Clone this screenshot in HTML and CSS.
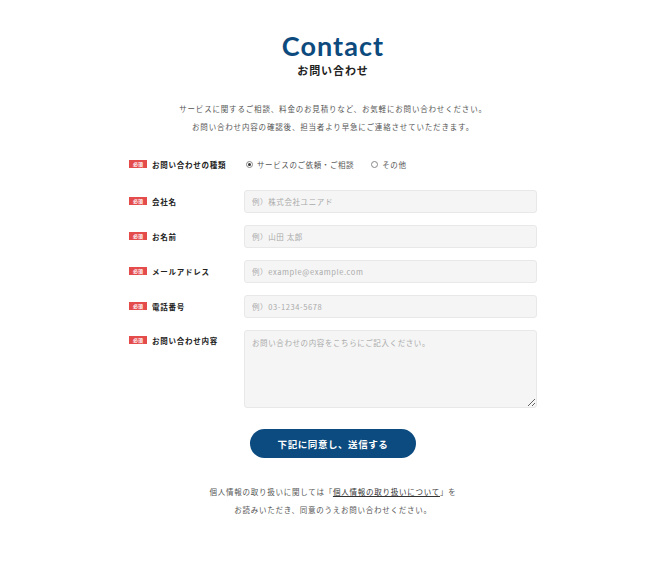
FILE: index.html
```html
<!DOCTYPE html>
<html lang="ja">
<head>
  <meta charset="UTF-8" />
  <meta name="viewport" content="width=device-width, initial-scale=1" />
  <title>Contact</title>
  <link rel="stylesheet" href="styles.css">
</head>
<body>

  <main class="contact">
    <header class="contact-head">
      <h1>Contact</h1>
      <p class="sub">お問い合わせ</p>
    </header>

    <p class="lead">
      サービスに関するご相談、料金のお見積りなど、お気軽にお問い合わせください。<br>
      お問い合わせ内容の確認後、担当者より早急にご連絡させていただきます。
    </p>

    <form class="form">
      <div class="row row-type">
        <div class="label"><span class="req">必須</span>お問い合わせの種類</div>
        <div class="field radios">
          <label class="radio"><span class="dot checked"></span>サービスのご依頼・ご相談</label>
          <label class="radio"><span class="dot"></span>その他</label>
        </div>
      </div>

      <div class="row">
        <div class="label"><span class="req">必須</span>会社名</div>
        <div class="field"><input type="text" placeholder="例）株式会社ユニアド"></div>
      </div>

      <div class="row">
        <div class="label"><span class="req">必須</span>お名前</div>
        <div class="field"><input type="text" placeholder="例）山田 太郎"></div>
      </div>

      <div class="row">
        <div class="label"><span class="req">必須</span>メールアドレス</div>
        <div class="field"><input type="email" placeholder="例）example@example.com"></div>
      </div>

      <div class="row">
        <div class="label"><span class="req">必須</span>電話番号</div>
        <div class="field"><input type="tel" placeholder="例）03-1234-5678"></div>
      </div>

      <div class="row row-message">
        <div class="label"><span class="req">必須</span>お問い合わせ内容</div>
        <div class="field"><textarea placeholder="お問い合わせの内容をこちらにご記入ください。"></textarea></div>
      </div>

      <div class="submit">
        <button type="button">下記に同意し、送信する</button>
      </div>
    </form>

    <p class="note">
      個人情報の取り扱いに関しては「<a href="#">個人情報の取り扱いについて</a>」を<br>
      お読みいただき、同意のうえお問い合わせください。
    </p>
  </main>

</body>
</html>
```

FILE: styles.css
```css
/* Reset */
* {
  margin: 0;
  padding: 0;
  box-sizing: border-box;
}

body {
  background-color: #fff;
  color: #333;
  font-family: "Noto Sans CJK JP", "Noto Sans", sans-serif;
}

.contact {
  width: 408px;
  margin: 0 auto;
  padding-top: 30px;
}

.contact-head {
  text-align: center;
}

.contact-head h1 {
  font-family: Lato, "Noto Sans", sans-serif;
  font-weight: 700;
  font-size: 27px;
  line-height: 32px;
  letter-spacing: 0.04em;
  color: #0d4a7e;
}

.contact-head .sub {
  font-size: 11px;
  font-weight: 700;
  line-height: 16px;
  letter-spacing: 0.08em;
  color: #222;
}

.lead {
  margin-top: 22px;
  text-align: center;
  font-size: 7.5px;
  line-height: 18px;
  letter-spacing: 0.11em;
  color: #555;
}

.form {
  margin-top: 21px;
}

.row {
  display: flex;
  align-items: flex-start;
  margin-bottom: 12px;
}

.row-type {
  margin-bottom: 19px;
}

.label {
  width: 115px;
  flex-shrink: 0;
  display: flex;
  align-items: center;
  height: 22px;
  font-size: 7.5px;
  font-weight: 700;
  letter-spacing: 0.1em;
  color: #222;
}

.row-type .label,
.row-type .field {
  height: 14px;
}

.row-message .label {
  height: 20px;
}

.req {
  display: inline-block;
  width: 18px;
  height: 8px;
  line-height: 8px;
  margin-right: 5px;
  background: #e44b4b;
  color: #fff;
  font-size: 5px;
  font-weight: 700;
  text-align: center;
  letter-spacing: 0;
}

.field {
  flex: 1;
}

.radios {
  display: flex;
  align-items: center;
  gap: 17px;
  padding-left: 2px;
  font-size: 7.5px;
  letter-spacing: 0.08em;
  color: #555;
}

.radio {
  display: flex;
  align-items: center;
}

.dot {
  width: 7px;
  height: 7px;
  border: 1px solid #888;
  border-radius: 50%;
  margin-right: 4px;
  position: relative;
}

.dot.checked::after {
  content: "";
  position: absolute;
  top: 1px;
  left: 1px;
  width: 3px;
  height: 3px;
  border-radius: 50%;
  background: #333;
}

input,
textarea {
  display: block;
  width: 100%;
  height: 23px;
  padding: 0 7px;
  background: #f5f5f5;
  border: 1px solid #e8e8e8;
  border-radius: 3px;
  font-family: "Noto Sans CJK JP", "Noto Sans", sans-serif;
  font-size: 7.5px;
  letter-spacing: 0.08em;
  color: #333;
  outline: none;
}

textarea {
  height: 78px;
  padding: 6px 7px;
  resize: vertical;
}

input::placeholder,
textarea::placeholder {
  color: #aaa;
}

.submit {
  display: flex;
  justify-content: center;
  margin-top: 21px;
}

.submit button {
  width: 166px;
  height: 29px;
  border: none;
  border-radius: 15px;
  background: #0c4b80;
  color: #fff;
  font-family: "Noto Sans CJK JP", "Noto Sans", sans-serif;
  font-size: 9.5px;
  font-weight: 700;
  letter-spacing: 0.06em;
  cursor: pointer;
}

.note {
  margin-top: 25px;
  text-align: center;
  font-size: 7.5px;
  line-height: 18px;
  letter-spacing: 0.1em;
  color: #555;
}

.note a {
  color: #333;
  text-decoration: underline;
}
```
